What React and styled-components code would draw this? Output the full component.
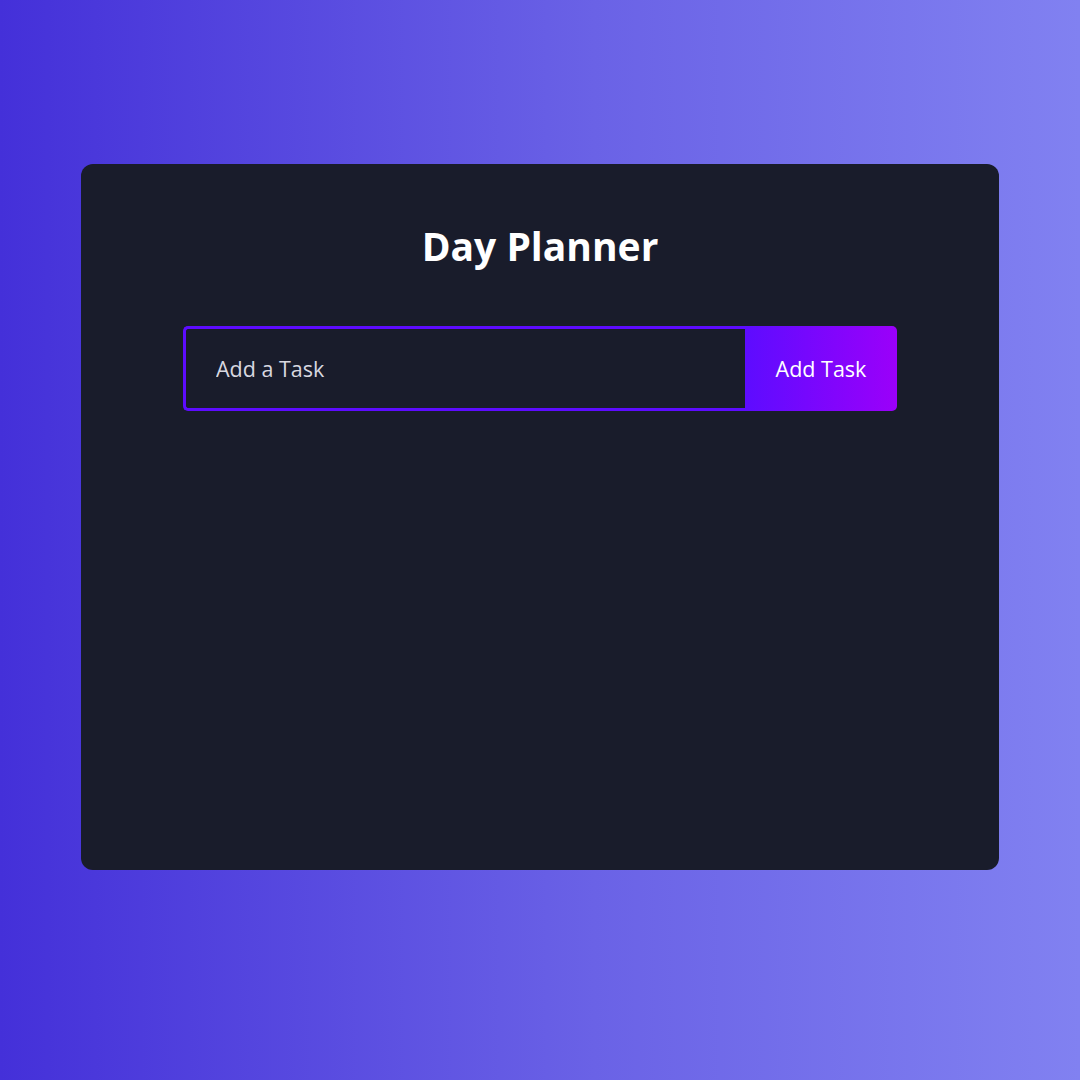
import React, { useState } from 'react';
import styled, { createGlobalStyle } from 'styled-components';

const GlobalStyle = createGlobalStyle`
  * { box-sizing: border-box; }
  html, body {
    margin: 0;
    padding: 0;
  }
  body {
    font-family: "Trebuchet MS", "Open Sans", "Noto Sans", sans-serif;
  }
`;

const Page = styled.div`
  width: 1080px;
  height: 1080px;
  background: linear-gradient(90deg, #4430d9 0%, #6a62e6 55%, #8181f1 100%);
  padding-top: 164px;
  display: flex;
  justify-content: center;
`;

const Card = styled.div`
  width: 918px;
  height: 706px;
  background: #191c2b;
  border-radius: 12px;
  padding-top: 60px;
  display: flex;
  flex-direction: column;
  align-items: center;
`;

const Title = styled.h1`
  margin: 0;
  color: #ffffff;
  font-size: 39px;
  font-weight: 700;
  line-height: 44px;
`;

const Form = styled.form`
  margin-top: 58px;
  display: flex;
  width: 714px;
  height: 85px;
`;

const Input = styled.input`
  flex: 1;
  height: 100%;
  background: transparent;
  border: 3px solid #5d0cff;
  border-right: none;
  border-radius: 5px 0 0 5px;
  padding: 0 30px;
  color: #fff;
  font-family: inherit;
  font-size: 21.5px;
  outline: none;

  &::placeholder {
    color: #d8d8e0;
  }
`;

const Button = styled.button`
  width: 152px;
  height: 100%;
  border: none;
  border-radius: 0 5px 5px 0;
  background: linear-gradient(90deg, #5d0cff 0%, #9b00fa 100%);
  color: #fff;
  font-family: inherit;
  font-size: 21.5px;
  cursor: pointer;
`;

export default function App() {
  const [task, setTask] = useState('');
  return (
    <>
      <GlobalStyle />
      <Page>
        <Card>
          <Title>Day Planner</Title>
          <Form onSubmit={e => e.preventDefault()}>
            <Input
              placeholder="Add a Task"
              value={task}
              onChange={e => setTask(e.target.value)}
            />
            <Button type="submit">Add Task</Button>
          </Form>
        </Card>
      </Page>
    </>
  );
}
